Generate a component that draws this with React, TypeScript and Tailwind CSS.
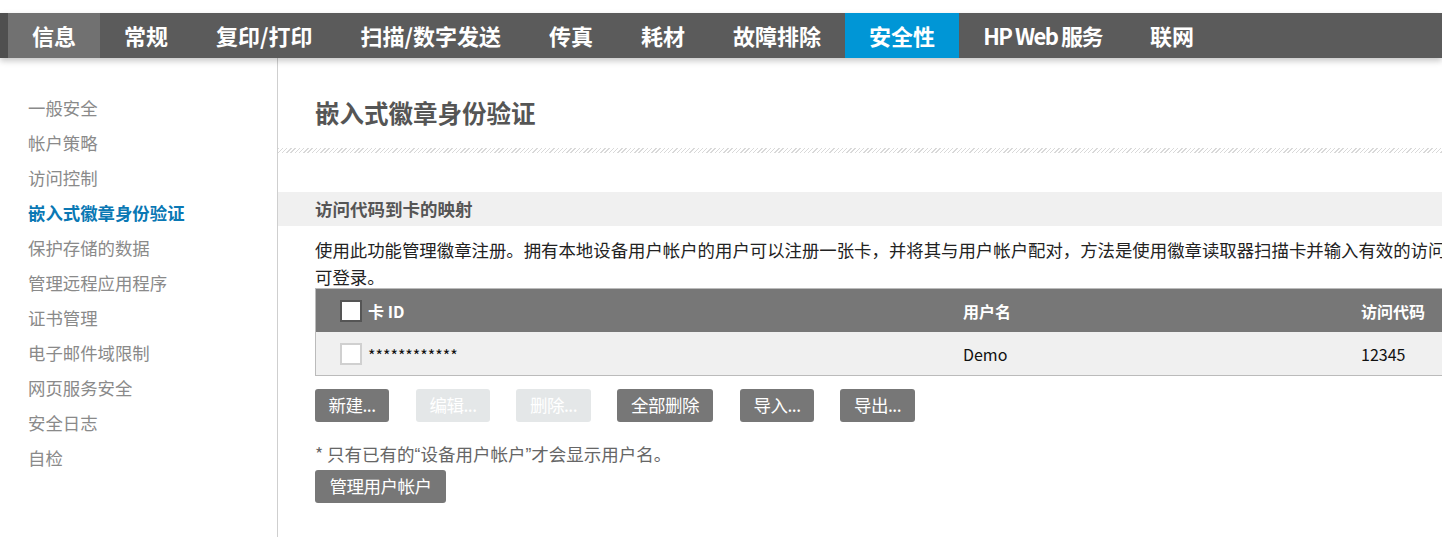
const navItems = [
  { label: "信息", state: "current" },
  { label: "常规" },
  { label: "复印/打印" },
  { label: "扫描/数字发送" },
  { label: "传真" },
  { label: "耗材" },
  { label: "故障排除" },
  { label: "安全性", state: "active" },
  { label: "HP Web 服务", tight: true },
  { label: "联网" },
];

const sideItems = [
  "一般安全",
  "帐户策略",
  "访问控制",
  "嵌入式徽章身份验证",
  "保护存储的数据",
  "管理远程应用程序",
  "证书管理",
  "电子邮件域限制",
  "网页服务安全",
  "安全日志",
  "自检",
];

const buttons = [
  { label: "新建...", w: "w-[74px]", ml: "ml-0", disabled: false },
  { label: "编辑...", w: "w-[74px]", ml: "ml-[27px]", disabled: true },
  { label: "删除...", w: "w-[75px]", ml: "ml-[26px]", disabled: true },
  { label: "全部删除", w: "w-[96px]", ml: "ml-[26px]", disabled: false },
  { label: "导入...", w: "w-[74px]", ml: "ml-[27px]", disabled: false },
  { label: "导出...", w: "w-[75px]", ml: "ml-[26px]", disabled: false },
];

function NavBar() {
  return (
    <div className="relative z-10 flex h-[45px] bg-[#5b5b5b] shadow-[0_3px_6px_rgba(0,0,0,0.22)]">
      <div className="w-[8px] bg-[#4f4f4f]" />
      {navItems.map((n) => (
        <div
          key={n.label}
          className={
            "flex items-center whitespace-nowrap px-[24px] pb-[1px] text-[22px] font-bold text-white " +
            (n.tight ? "tracking-[-1.5px] " : "") +
            (n.state === "current"
              ? "bg-[#717171]"
              : n.state === "active"
              ? "bg-[#0096d6]"
              : "")
          }
        >
          {n.label}
        </div>
      ))}
    </div>
  );
}

function Sidebar() {
  return (
    <aside className="w-[278px] shrink-0 border-r border-[#cfcfcf] pt-[32px]">
      <ul>
        {sideItems.map((s) => (
          <li
            key={s}
            className={
              "pl-[28px] text-[17.4px] leading-[35px] " +
              (s === "嵌入式徽章身份验证" ? "font-bold text-[#0a78b4]" : "text-[#8a8a8a]")
            }
          >
            {s}
          </li>
        ))}
      </ul>
    </aside>
  );
}

function Btn({ label, w, ml, disabled }: { label: string; w: string; ml: string; disabled: boolean }) {
  return (
    <div
      className={
        "flex h-[33px] items-center justify-center rounded-[3px] text-[17.5px] tracking-[-0.5px] text-white " +
        w +
        " " +
        ml +
        " " +
        (disabled ? "bg-[#e4e7e8]" : "bg-[#777777]")
      }
    >
      {label}
    </div>
  );
}

const latin = { fontFamily: '"Liberation Sans", sans-serif' };

export default function App() {
  return (
    <div
      className="h-[537px] w-full overflow-hidden bg-white"
      style={{ fontFamily: '"Noto Sans CJK SC", "Noto Sans", sans-serif' }}
    >
      <div className="h-[13px]" />
      <NavBar />
      <div className="flex h-[479px]">
        <Sidebar />
        <main className="min-w-0 flex-1 overflow-hidden">
          <div className="h-[90px] pl-[37px] pt-[39px]">
            <h1 className="text-[24.5px] font-bold leading-[32px] text-[#555555]">嵌入式徽章身份验证</h1>
          </div>
          <div className="h-[5px] bg-[repeating-linear-gradient(135deg,#d9d9d9_0px,#d9d9d9_1px,#ffffff_1px,#ffffff_3px)]" />
          <div className="mt-[39px] flex h-[34px] items-center bg-[#f0f0f0] pl-[37px]">
            <span className="text-[17.5px] font-bold text-[#555555]">访问代码到卡的映射</span>
          </div>
          <div className="pl-[37px] pt-[10px]">
            <div className="whitespace-nowrap text-[17.4px] leading-[27px] text-[#222222]">
              使用此功能管理徽章注册。拥有本地设备用户帐户的用户可以注册一张卡，并将其与用户帐户配对，方法是使用徽章读取器扫描卡并输入有效的访问代码。注册后，用户只需扫描卡即
            </div>
            <div className="text-[17.4px] leading-[27px] text-[#222222]">可登录。</div>
            <div className="-mt-[2px] w-[1200px] border border-[#bbbbbb]">
              <div className="flex h-[43px] items-center bg-[#777777] text-[16px] font-bold text-white">
                <div className="ml-[24px] h-[22px] w-[22px] border-2 border-[#555555] bg-white" />
                <div className="ml-[6px] w-[595px]">卡 ID</div>
                <div className="w-[398px]">用户名</div>
                <div>访问代码</div>
              </div>
              <div className="flex h-[43px] items-center bg-[#f0f0f0] text-[16px] text-[#111111]">
                <div className="ml-[24px] h-[22px] w-[22px] border-2 border-[#d0d0d0] bg-white" />
                <div className="ml-[6px] w-[595px] pt-[2px]">************</div>
                <div className="w-[398px]">Demo</div>
                <div>12345</div>
              </div>
            </div>
            <div className="mt-[13px] flex">
              {buttons.map((b) => (
                <Btn key={b.label} {...b} />
              ))}
            </div>
            <div className="mt-[21px] text-[17.5px] leading-[22px] text-[#666666]">
              * 只有已有的<span style={latin}>“</span>设备用户帐户<span style={latin}>”</span>才会显示用户名。
            </div>
            <div className="mt-[4px] flex">
              <Btn label="管理用户帐户" w="w-[131px]" ml="ml-0" disabled={false} />
            </div>
          </div>
        </main>
      </div>
    </div>
  );
}
